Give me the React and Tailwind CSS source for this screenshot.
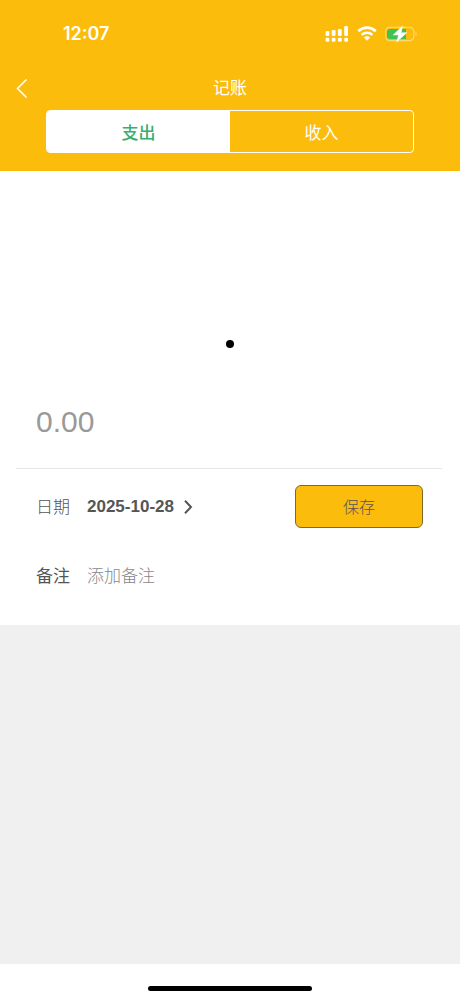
import React, { useState } from 'react';

// Phone status bar: clock, dual signal, wifi and battery
function StatusBar() {
  return (
    <div className="flex h-[67px] items-center justify-between pl-[63px] pr-[42px]">
      <span className="font-['Inter',sans-serif] text-lg font-semibold">12:07</span>
      <div className="flex items-center gap-2">
        {/* Signal */}
        <svg width="24" height="16" viewBox="0 0 24 16" fill="currentColor" aria-hidden="true">
          <rect x="0.5" y="5" width="3.8" height="5" rx="1.2" />
          <rect x="6.7" y="4" width="3.8" height="6" rx="1.2" />
          <rect x="12.9" y="3" width="3.8" height="7" rx="1.2" />
          <rect x="19.2" y="0" width="3.8" height="10" rx="1.2" />
          <rect x="0.5" y="11.8" width="3.8" height="4" rx="1.2" />
          <rect x="6.7" y="11.8" width="3.8" height="4" rx="1.2" />
          <rect x="12.9" y="11.8" width="3.8" height="4" rx="1.2" />
          <rect x="19.2" y="11.8" width="3.8" height="4" rx="1.2" />
        </svg>
        {/* Wifi */}
        <svg width="20" height="15" viewBox="0 0 20 15" fill="none" stroke="currentColor" aria-hidden="true">
          <path d="M1.3 5.2a12.6 12.6 0 0 1 17.4 0" strokeWidth="2.8" />
          <path d="M4.6 8.8a7.9 7.9 0 0 1 10.8 0" strokeWidth="2.5" />
          <path d="M6.9 11.6a4.6 4.6 0 0 1 6.2 0L10 14.8z" fill="currentColor" stroke="none" />
        </svg>
        {/* Battery */}
        <svg width="33" height="18" viewBox="0 0 33 18" aria-hidden="true">
          <rect x="0.8" y="2.3" width="28" height="13.4" rx="4" fill="none" stroke="#fcda72" strokeWidth="1.2" />
          <path d="M30.5 6.5c1.6.7 1.6 4.3 0 5z" fill="#fdd96a" />
          <path d="M5 4h16v10H5a3 3 0 0 1-3-3V7a3 3 0 0 1 3-3z" fill="#3fc453" />
          <path d="M17.5 1 8.2 10h5.4l-2 7L21.8 7.7h-5.6z" fill="#fff" stroke="#fff" strokeWidth="0.5" />
        </svg>
      </div>
    </div>
  );
}

// Switches between expense and income
function TypeTabs({ type, onChange }) {
  const tabs = [
    { id: 'expense', label: '支出' },
    { id: 'income', label: '收入' },
  ];

  return (
    <div className="mx-[46px] grid h-[43px] grid-cols-2 overflow-hidden rounded border border-white">
      {tabs.map((tab) => (
        <button
          key={tab.id}
          type="button"
          aria-pressed={type === tab.id}
          onClick={() => onChange(tab.id)}
          className={type === tab.id ? 'bg-white pt-1 font-medium text-[#3aad6e]' : 'pt-1 text-white'}
        >
          {tab.label}
        </button>
      ))}
    </div>
  );
}

function App() {
  const [type, setType] = useState('expense');
  const [amount, setAmount] = useState('');
  const [note, setNote] = useState('');

  return (
    <div className="flex min-h-screen flex-col bg-[#f0f0f0] font-['Liberation_Sans','Noto_Sans_CJK_SC',sans-serif] text-[17px] text-[#555]">
      {/* Header */}
      <header className="bg-[#fbbc0c] pb-[18px] text-white">
        <StatusBar />
        <div className="grid h-[43px] grid-cols-3 items-center px-4">
          <button type="button" aria-label="返回" className="flex w-6 pb-0.5">
            <svg width="12" height="20" viewBox="0 0 12 20" fill="none" stroke="currentColor" strokeWidth="1.5" aria-hidden="true">
              <path d="M10.5 1.5 1.5 10.5 10.5 19.5" />
            </svg>
          </button>
          <h1 className="text-center">记账</h1>
        </div>
        <TypeTabs type={type} onChange={setType} />
      </header>

      <main className="bg-white">
        {/* Category pager */}
        <div className="flex h-[205px] items-end justify-center pb-7">
          <span className="size-2 rounded-full bg-black" />
        </div>

        {/* Amount */}
        <div className="ml-4 mr-[18px] flex h-[93px] items-center border-b border-[#e6e6e6] px-5 pb-0.5">
          <input
            type="text"
            inputMode="decimal"
            aria-label="金额"
            placeholder="0.00"
            value={amount}
            onChange={(e) => setAmount(e.target.value)}
            className="w-full text-[30px] outline-none placeholder:text-[#999]"
          />
        </div>

        {/* Date and save */}
        <div className="flex h-[75px] items-center pl-9 pr-[37px]">
          <span className="w-[51px] pt-0.5 font-light">日期</span>
          <button type="button" className="flex items-center gap-2.5 font-bold">
            2025-10-28
            <svg width="9" height="14" viewBox="0 0 9 14" fill="none" stroke="currentColor" strokeWidth="2" aria-hidden="true">
              <path d="M1 .7 7 7 1 13.3" />
            </svg>
          </button>
          <button
            type="button"
            className="ml-auto h-[43px] w-32 rounded-md border border-[#80682a] bg-[#fbbc0c] pt-0.5 text-base font-light text-[#555]"
          >
            保存
          </button>
        </div>

        {/* Note */}
        <div className="flex h-[81px] items-start px-9 pt-5">
          <label htmlFor="note" className="w-[51px]">备注</label>
          <input
            id="note"
            type="text"
            placeholder="添加备注"
            value={note}
            onChange={(e) => setNote(e.target.value)}
            className="min-w-0 flex-1 font-light outline-none placeholder:text-[#888]"
          />
        </div>
      </main>

      {/* Home indicator */}
      <footer className="mt-auto flex h-9 items-end justify-center bg-white pb-[9px]">
        <span className="h-[5px] w-[164px] rounded-full bg-black" />
      </footer>
    </div>
  );
}

export default App;
